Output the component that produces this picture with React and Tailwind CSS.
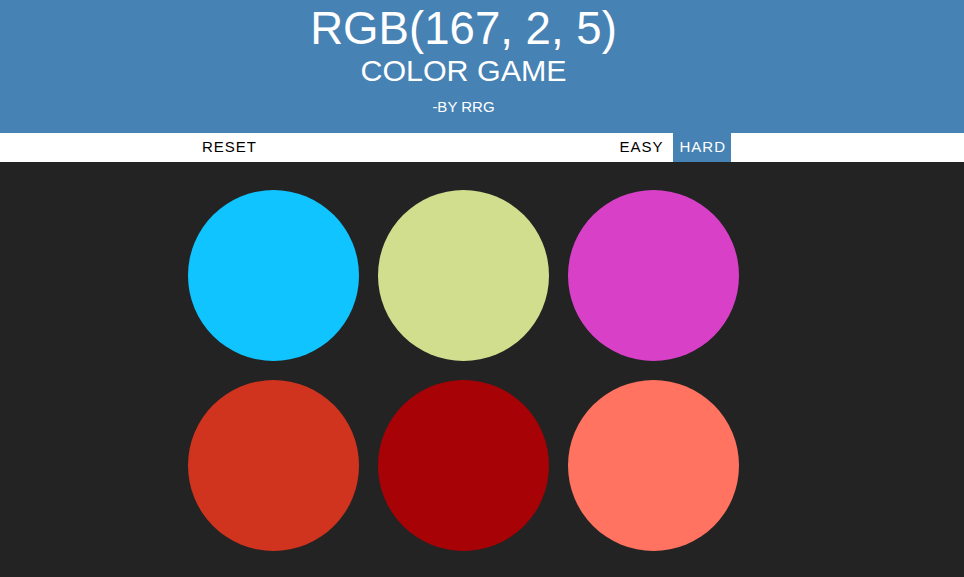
export default function App() {
  const colors = [
    "rgb(16, 196, 255)",
    "rgb(209, 222, 142)",
    "rgb(216, 64, 200)",
    "rgb(208, 52, 30)",
    "rgb(167, 2, 5)",
    "rgb(255, 115, 96)",
  ];
  return (
    <div className="min-h-[577px] w-full bg-[#232323] font-['Liberation_Sans',Arial,sans-serif]">
      <header className="bg-[#4682b4] text-white">
        <div className="w-[927px] flex flex-col items-center pt-[6px] pb-[19px]">
          <h1 className="text-[45.6px] leading-[45px] font-normal">RGB(167, 2, 5)</h1>
          <h2 className="text-[30.4px] leading-[30px] mt-[4px] font-normal">COLOR GAME</h2>
          <p className="text-[15px] leading-[15px] mt-[14px]">-BY RRG</p>
        </div>
      </header>
      <nav className="bg-white h-[29px]">
        <div className="w-[927px] h-full flex justify-center">
          <div className="w-[551px] h-full flex justify-between items-stretch">
            <button className="pl-[14px] text-[15px] tracking-[1px] text-black h-full">RESET</button>
            <div className="flex h-full gap-[4px] pr-[8px]">
              <button className="px-[6px] text-[15px] tracking-[1px] text-black h-full">EASY</button>
              <button className="pl-[6px] pr-[5px] text-[15px] tracking-[1px] text-white bg-[#4682b4] h-full">HARD</button>
            </div>
          </div>
        </div>
      </nav>
      <div className="w-[927px] flex justify-center pt-[28px]">
        <div className="grid grid-cols-3 gap-[19px]">
          {colors.map((c, i) => (
            <div key={i} className="w-[171px] h-[171px] rounded-full" style={{ backgroundColor: c }} />
          ))}
        </div>
      </div>
    </div>
  );
}
